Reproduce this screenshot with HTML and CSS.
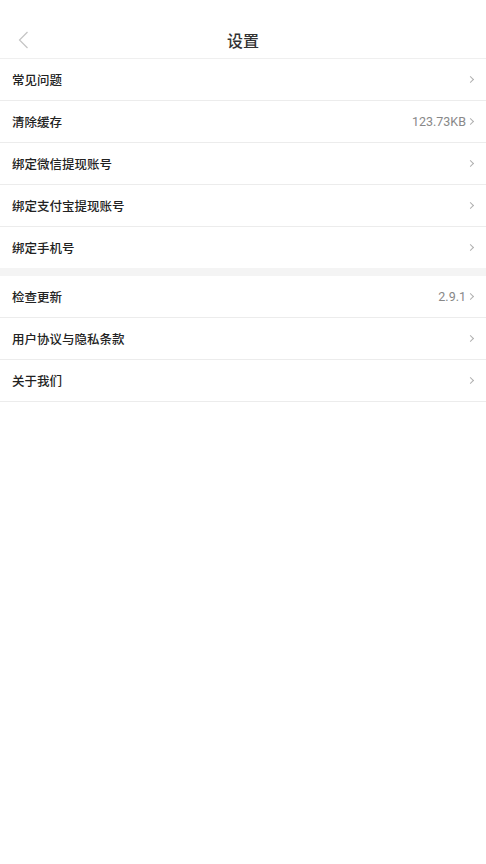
FILE: index.html
```html
<!DOCTYPE html>
<html lang="zh">
<head>
<meta charset="utf-8">
<title>设置</title>
<link rel="stylesheet" href="styles.css">
</head>
<body>
<div class="page">
  <header class="nav">
    <span class="back">
      <svg width="11" height="18" viewBox="0 0 11 18"><path d="M9.5 1 L1.5 9 L9.5 17" fill="none" stroke="#c4c4c4" stroke-width="1.2"/></svg>
    </span>
    <h1 class="title">设置</h1>
  </header>
  <section class="group">
    <div class="row"><span class="label">常见问题</span><span class="right"><span class="arrow"></span></span></div>
    <div class="row"><span class="label">清除缓存</span><span class="right"><span class="value">123.73KB</span><span class="arrow"></span></span></div>
    <div class="row"><span class="label">绑定微信提现账号</span><span class="right"><span class="arrow"></span></span></div>
    <div class="row"><span class="label">绑定支付宝提现账号</span><span class="right"><span class="arrow"></span></span></div>
    <div class="row last"><span class="label">绑定手机号</span><span class="right"><span class="arrow"></span></span></div>
  </section>
  <div class="gap"></div>
  <section class="group">
    <div class="row"><span class="label">检查更新</span><span class="right"><span class="value">2.9.1</span><span class="arrow"></span></span></div>
    <div class="row"><span class="label">用户协议与隐私条款</span><span class="right"><span class="arrow"></span></span></div>
    <div class="row"><span class="label">关于我们</span><span class="right"><span class="arrow"></span></span></div>
  </section>
</div>
</body>
</html>
```
FILE: styles.css
```css
* { box-sizing: border-box; }
html, body {
  margin: 0;
  padding: 0;
  background: #fff;
}
body {
  font-family: "Noto Sans CJK SC", "Roboto", "Noto Sans", sans-serif;
  color: #222;
}
.page {
  width: 486px;
  min-height: 864px;
  background: #fff;
}
.nav {
  position: relative;
  height: 59px;
  border-bottom: 1px solid #efefef;
  display: flex;
  align-items: center;
  justify-content: center;
  padding-top: 22px;
}
.back {
  position: absolute;
  left: 18px;
  top: 31px;
  display: flex;
}
.title {
  margin: 0;
  font-size: 16px;
  font-weight: 500;
  color: #333;
  line-height: 20px;
}
.row {
  height: 42px;
  border-bottom: 1px solid #ececec;
  display: flex;
  align-items: center;
  justify-content: space-between;
  padding: 0 13px 0 12px;
}
.row.last {
  height: 41px;
  border-bottom: none;
}
.label {
  font-size: 12.5px;
  font-weight: 500;
  color: #222;
}
.right {
  display: flex;
  align-items: center;
}
.value {
  font-family: "Roboto", "Noto Sans", sans-serif;
  font-size: 12.5px;
  color: #888;
  margin-right: 2px;
}
.arrow {
  width: 5px;
  height: 5px;
  border-top: 1px solid #b0b0b0;
  border-right: 1px solid #b0b0b0;
  transform: rotate(45deg);
}
.gap {
  height: 8px;
  background: #f4f4f4;
}
```
